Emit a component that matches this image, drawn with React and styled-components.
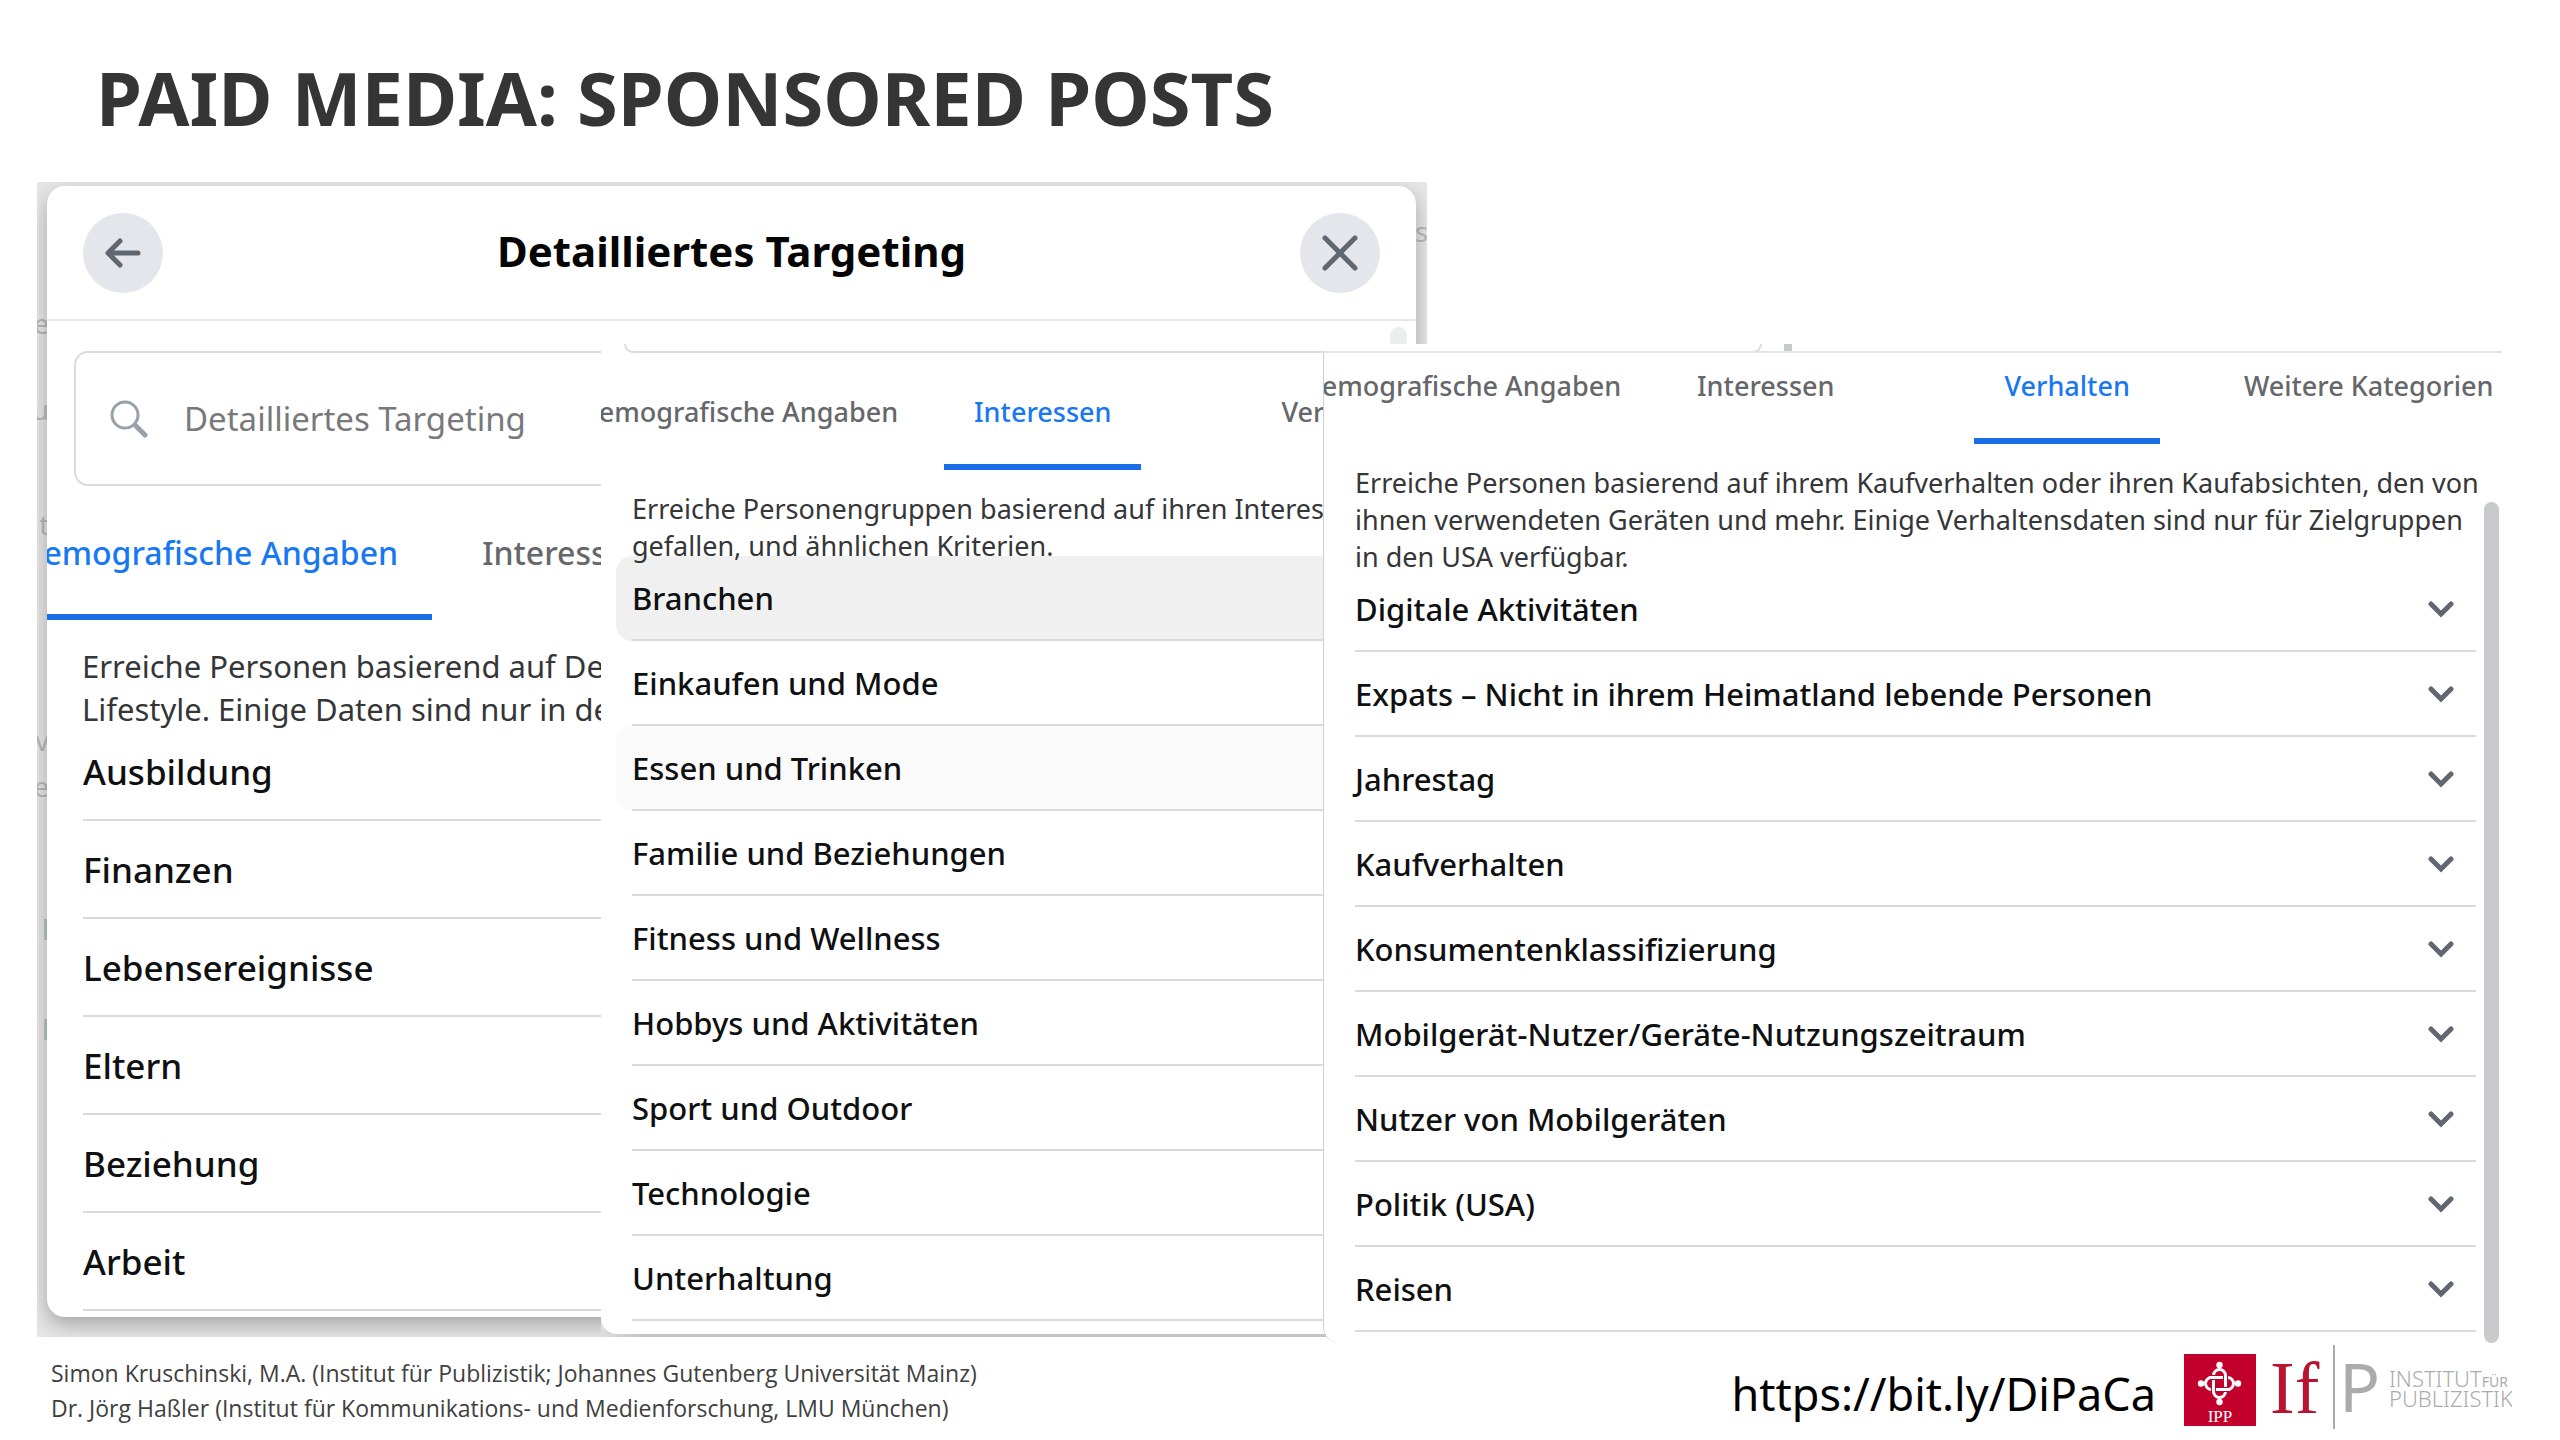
import { useState } from "react";
import styled, { createGlobalStyle } from "styled-components";

const GlobalStyle = createGlobalStyle`
  * {
    box-sizing: border-box;
  }
  body {
    margin: 0;
    background: white;
    color: #0f1011;
    font-family: "Noto Sans", "Open Sans", sans-serif;
  }
  h1, h2, p, ul {
    margin: 0;
    padding: 0;
  }
  ul {
    list-style: none;
  }
  button, input {
    font-family: inherit;
    border: none;
    background: none;
    padding: 0;
  }
  svg {
    display: block;
    flex-shrink: 0;
  }
`;

const Slide = styled.main`
  overflow: hidden;
`;

const SlideTitle = styled.h1`
  padding: 48px 96px 34px;
  font-size: 74px;
  line-height: 100px;
  font-weight: 700;
  color: #353535;
`;

// the three dialogs lie over each other like cards
const Board = styled.div`
  display: grid;
  grid-template-columns: 564fr 722fr 104fr 373fr 702fr;
  grid-template-rows: 162px auto;
  align-items: start;
  margin: 0 58px 0 37px;
`;

const Backdrop = styled.div`
  grid-column: 1 / 4;
  grid-row: 1 / 3;
  position: relative;
  overflow: hidden;
  padding: 4px 11px 20px 10px;
  background: #e6e6e6;
`;

const Ghost = styled.span`
  position: absolute;
  top: ${(props) => props.$top}px;
  ${(props) => (props.$right ? "left: calc(100% - 12px);" : "right: calc(100% - 12px);")}
  font-size: 27px;
  line-height: 36px;
  color: ${(props) => props.$color || "#b9b9b9"};
`;

const Dialog = styled.section`
  position: relative;
  overflow: hidden;
  padding-bottom: 6px;
  border-radius: 18px;
  background: white;
  box-shadow: 0 8px 20px rgba(0, 0, 0, 0.28);
`;

const DialogHeader = styled.header`
  display: flex;
  align-items: center;
  justify-content: space-between;
  height: 135px;
  padding: 0 36px;
  border-bottom: 2px solid #e6e7e9;
`;

const DialogTitle = styled.h2`
  padding-bottom: 4px;
  font-size: 42px;
  font-weight: 700;
  color: #050505;
`;

const RoundButton = styled.button`
  display: flex;
  align-items: center;
  justify-content: center;
  width: 80px;
  height: 80px;
  border-radius: 50%;
  background: #e4e6eb;
`;

const SearchRow = styled.div`
  display: flex;
  align-items: flex-start;
  justify-content: space-between;
  padding: 0 9px 0 27px;
`;

const SearchBox = styled.label`
  display: flex;
  flex: 1;
  align-items: center;
  gap: 36px;
  height: 135px;
  margin: 30px 28px 0 0;
  padding-left: 34px;
  border: 2px solid #d9dcdc;
  border-radius: 14px;
`;

const SearchInput = styled.input`
  flex: 1;
  font-size: 33px;
  outline: none;
  &::placeholder {
    color: #77797b;
    opacity: 1;
  }
`;

const ScrollStub = styled.div`
  width: 17px;
  height: 40px;
  margin-top: 6px;
  border-radius: 9px;
  background: #eceeee;
`;

const InterestsFrame = styled.div`
  grid-column: 2 / 5;
  grid-row: 2;
  z-index: 1;
  padding-bottom: 3px;
  background: linear-gradient(90deg, #dedede, #c4c4c4 40px);
`;

const InterestsPanel = styled.section`
  overflow: hidden;
  padding-bottom: 13px;
  border-radius: 0 0 0 16px;
  background: white;
`;

const CutRow = styled.div`
  display: flex;
  align-items: flex-start;
  gap: 22px;
  padding: 0 8px 0 23px;
`;

const CutBox = styled.div`
  flex: 1;
  height: 9px;
  border: 2px solid #d9dcdc;
  border-top: none;
  border-radius: 0 0 12px 12px;
`;

const CutThumb = styled.div`
  width: 8px;
  height: 9px;
  background: #c9cacb;
`;

const BehaviourPanel = styled.section`
  grid-column: 3 / 6;
  grid-row: 2;
  z-index: 2;
  position: relative;
  overflow: hidden;
  margin-top: 7px;
  padding-bottom: 11px;
  border-top: 2px solid #e4e5e6;
  border-left: 1px solid #cfd0d1;
  border-radius: 0 0 0 16px;
  background: white;
`;

const ScrollThumb = styled.div`
  position: absolute;
  top: 149px;
  right: 3px;
  bottom: 0;
  width: 15px;
  border-radius: 8px;
  background: #c9cacb;
`;

// first tab is scrolled a little out of the panel
const TabList = styled.div`
  display: flex;
  height: ${(props) => props.$height}px;
  margin-left: ${(props) => (props.$large ? "-61px" : "-52px")};
  font-size: ${(props) => (props.$large ? "32px" : "27px")};
`;

const Tab = styled.button`
  flex-shrink: 0;
  margin-right: ${(props) => props.$gap}px;
  padding: ${(props) => (props.$raised ? "0 30px 21px" : "5px 30px 0")};
  ${(props) => props.$large && "padding: 5px 34px 0;"}
  border-bottom: 6px solid ${(props) => (props.$active ? "#1b6fe6" : "transparent")};
  font-size: inherit;
  font-weight: 500;
  color: ${(props) => (props.$active ? "#1877f2" : "#65676b")};
  white-space: nowrap;
`;

const Intro = styled.p`
  margin: ${(props) => (props.$large ? "25px 20px -8px 35px" : "20px 20px -8px 31px")};
  font-size: ${(props) => (props.$large ? "31px" : "27px")};
  line-height: ${(props) => (props.$large ? "43px" : "37px")};
  color: #343638;
`;

const List = styled.ul`
  margin: 0 10px 0 ${(props) => (props.$large ? "20px" : "15px")};
`;

const Item = styled.li`
  padding: 0 16px;
  border-radius: 16px;
  background: ${(props) => props.$tint || "transparent"};
`;

const ItemButton = styled.button`
  display: flex;
  align-items: center;
  justify-content: space-between;
  width: 100%;
  height: ${(props) => (props.$large ? "98px" : "85px")};
  padding-right: 22px;
  border-bottom: 2px solid #d8dadb;
  font-size: ${(props) => (props.$large ? "35px" : "31px")};
  font-weight: 500;
  color: #0f1011;
  text-align: left;
`;

const Footer = styled.footer`
  display: flex;
  align-items: flex-start;
  margin-top: 2px;
  padding: 0 48px 11px 51px;
`;

const Authors = styled.p`
  flex: 1;
  padding-top: 11px;
  font-family: "Open Sans", sans-serif;
  font-size: 23px;
  line-height: 35px;
  color: #404040;
`;

const ShortLink = styled.a`
  margin-right: 28px;
  padding-top: 19px;
  font-size: 45px;
  line-height: 60px;
  color: black;
  text-decoration: none;
`;

const demographics = [
  "Ausbildung",
  "Finanzen",
  "Lebensereignisse",
  "Eltern",
  "Beziehung",
  "Arbeit",
];

const interests = [
  "Branchen",
  "Einkaufen und Mode",
  "Essen und Trinken",
  "Familie und Beziehungen",
  "Fitness und Wellness",
  "Hobbys und Aktivitäten",
  "Sport und Outdoor",
  "Technologie",
  "Unterhaltung",
];

const behaviours = [
  "Digitale Aktivitäten",
  "Expats – Nicht in ihrem Heimatland lebende Personen",
  "Jahrestag",
  "Kaufverhalten",
  "Konsumentenklassifizierung",
  "Mobilgerät-Nutzer/Geräte-Nutzungszeitraum",
  "Nutzer von Mobilgeräten",
  "Politik (USA)",
  "Reisen",
];

const tints = { Branchen: "#f0f0f0", "Essen und Trinken": "#fafafa" };

const tabs = [
  { name: "Demografische Angaben", gap: 16 },
  { name: "Interessen", gap: 110 },
  { name: "Verhalten", gap: 54 },
  { name: "Weitere Kategorien", gap: 0 },
];

const BackIcon = () => (
  <svg width="36" height="32" viewBox="0 0 36 32" fill="none" stroke="#606770" strokeWidth="5">
    <path d="M15 4 3 16l12 12M4 16h29" strokeLinecap="round" strokeLinejoin="round" />
  </svg>
);

const CloseIcon = () => (
  <svg width="38" height="38" viewBox="0 0 38 38" stroke="#606770" strokeWidth="5">
    <path d="M4 4l30 30M34 4 4 34" strokeLinecap="round" />
  </svg>
);

const SearchIcon = () => (
  <svg width="38" height="38" viewBox="0 0 38 38" fill="none" stroke="#98a0aa">
    <circle cx="15" cy="15" r="13" strokeWidth="3" />
    <path d="M26 26l9 9" strokeWidth="5" strokeLinecap="round" />
  </svg>
);

const ChevronIcon = () => (
  <svg width="26" height="18" viewBox="0 0 26 18" fill="none" stroke="#606770" strokeWidth="5">
    <path d="M3 4l10 10L23 4" strokeLinecap="round" />
  </svg>
);

const InstituteLogo = () => (
  <svg width="328" height="84" viewBox="0 0 328 84" role="img" aria-label="Institut für Publizistik">
    <rect y="9" width="72" height="72" fill="#c1002b" />
    <g fill="none" stroke="white" strokeWidth="3">
      <rect x="21.500" y="32.500" width="28" height="12" rx="6" />
      <rect x="29.500" y="24.500" width="12" height="28" rx="6" stroke="#c1002b" strokeWidth="5" />
      <rect x="29.500" y="24.500" width="12" height="28" rx="6" />
      <path d="M26 32.500h7M38 44.500h7" stroke="#c1002b" strokeWidth="5" />
      <path d="M25 32.500h9M37 44.500h9" />
    </g>
    <g fill="white">
      <circle cx="35.500" cy="20" r="3.200" />
      <circle cx="35.500" cy="57" r="3.200" />
      <circle cx="17" cy="38.500" r="3.200" />
      <circle cx="54" cy="38.500" r="3.200" />
      <text x="36" y="77" fontSize="17" textAnchor="middle" fontFamily="Liberation Serif, serif">
        IPP
      </text>
    </g>
    <text x="86" y="68" fontSize="74" fill="#b8142f" fontFamily="Liberation Serif, serif">
      If
    </text>
    <path d="M150 0v84" stroke="#ababab" strokeWidth="2" />
    <g fill="#ababab" fontFamily="Noto Sans, sans-serif">
      <text x="155" y="67" fontSize="68">
        P
      </text>
      <text x="205" y="42" fontSize="22" fontWeight="300">
        INSTITUT
        <tspan fontSize="14" fontWeight="400">
          FÜR
        </tspan>
      </text>
      <text x="205" y="62" fontSize="22" fontWeight="300">
        PUBLIZISTIK
      </text>
    </g>
  </svg>
);

const Tabs = ({ start, count, height, large, raised }) => {
  const [active, setActive] = useState(start);

  return (
    <TabList role="tablist" $height={height} $large={large}>
      {tabs.slice(0, count).map((tab, index) => (
        <Tab
          key={tab.name}
          role="tab"
          aria-selected={active === index}
          $active={active === index}
          $gap={tab.gap}
          $large={large}
          $raised={raised}
          onClick={() => setActive(index)}
        >
          {tab.name}
        </Tab>
      ))}
    </TabList>
  );
};

const Categories = ({ items, large, chevrons }) => (
  <List $large={large}>
    {items.map((item) => (
      <Item key={item} $tint={tints[item]}>
        <ItemButton $large={large}>
          {item}
          {chevrons && <ChevronIcon />}
        </ItemButton>
      </Item>
    ))}
  </List>
);

const App = () => {
  return (
    <Slide>
      <GlobalStyle />
      <SlideTitle>PAID MEDIA: SPONSORED POSTS</SlideTitle>

      <Board>
        <Backdrop>
          <div aria-hidden="true">
            <Ghost $top={124}>e</Ghost>
            <Ghost $top={210}>u</Ghost>
            <Ghost $top={325}>t</Ghost>
            <Ghost $top={541}>v</Ghost>
            <Ghost $top={587}>e</Ghost>
            <Ghost $top={730} $color="#a9c0c0">l</Ghost>
            <Ghost $top={830} $color="#a9c0c0">l</Ghost>
            <Ghost $top={32} $right>s</Ghost>
          </div>
          <Dialog>
            <DialogHeader>
              <RoundButton aria-label="Zurück">
                <BackIcon />
              </RoundButton>
              <DialogTitle>Detailliertes Targeting</DialogTitle>
              <RoundButton aria-label="Schließen">
                <CloseIcon />
              </RoundButton>
            </DialogHeader>
            <SearchRow>
              <SearchBox>
                <SearchIcon />
                <SearchInput
                  type="text"
                  aria-label="Detailliertes Targeting"
                  placeholder="Detailliertes Targeting"
                />
              </SearchBox>
              <ScrollStub />
            </SearchRow>
            <Tabs start={0} count={2} height={134} large />
            <Intro $large>
              Erreiche Personen basierend auf Demografie und
              <br />
              Lifestyle. Einige Daten sind nur in den USA verfügbar.
            </Intro>
            <Categories items={demographics} large />
          </Dialog>
        </Backdrop>

        <InterestsFrame>
          <InterestsPanel>
            <CutRow>
              <CutBox />
              <CutThumb />
            </CutRow>
            <Tabs start={1} count={3} height={117} />
            <Intro>
              Erreiche Personengruppen basierend auf ihren Interessen,
              <br />
              gefallen, und ähnlichen Kriterien.
            </Intro>
            <Categories items={interests} />
          </InterestsPanel>
        </InterestsFrame>

        <BehaviourPanel>
          <Tabs start={2} count={4} height={91} raised />
          <Intro>
            Erreiche Personen basierend auf ihrem Kaufverhalten oder ihren Kaufabsichten, den von
            ihnen verwendeten Geräten und mehr. Einige Verhaltensdaten sind nur für Zielgruppen in
            den USA verfügbar.
          </Intro>
          <Categories items={behaviours} chevrons />
          <ScrollThumb />
        </BehaviourPanel>
      </Board>

      <Footer>
        <Authors>
          Simon Kruschinski, M.A. (Institut für Publizistik; Johannes Gutenberg Universität Mainz)
          <br />
          Dr. Jörg Haßler (Institut für Kommunikations- und Medienforschung, LMU München)
        </Authors>
        <ShortLink href="https://bit.ly/DiPaCa">https://bit.ly/DiPaCa</ShortLink>
        <InstituteLogo />
      </Footer>
    </Slide>
  );
};

export default App;
